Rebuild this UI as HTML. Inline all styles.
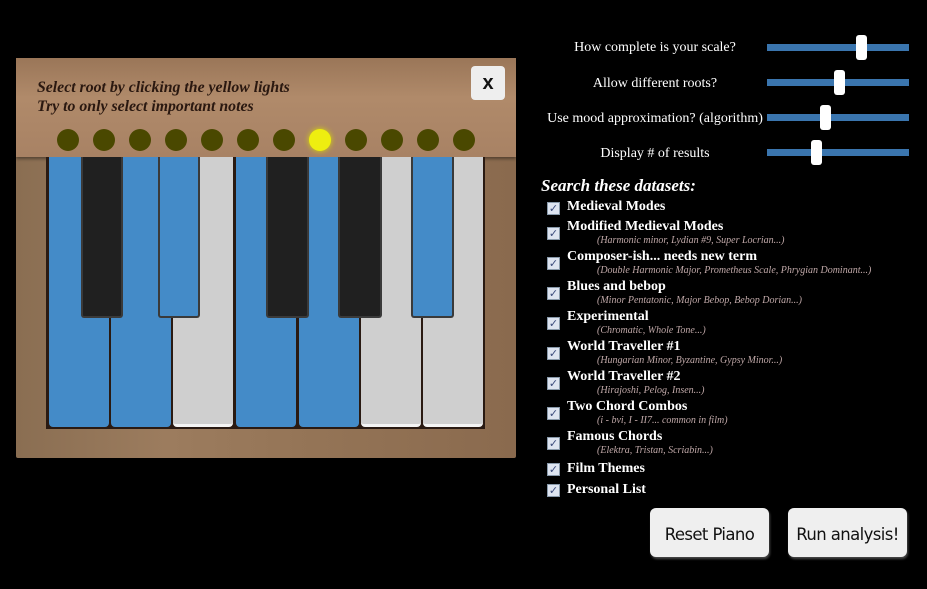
<!DOCTYPE html>
<html><head><meta charset="utf-8"><style>
*{margin:0;padding:0;box-sizing:border-box}
body{width:927px;height:589px;background:#000;position:relative;overflow:hidden;font-family:"Liberation Serif",serif}
.a{position:absolute}
.wood{left:16px;top:58px;width:500px;height:400px;background:linear-gradient(90deg,#8a6e52,#9c7c5e 30%,#947456 60%,#8a6a4e);border-radius:2px}
.top{left:16px;top:58px;width:500px;height:99px;background:linear-gradient(180deg,#9a7658,#b08a6a 40%,#a88264);box-shadow:0 2px 3px rgba(0,0,0,.4)}
.inst{left:37px;top:78px;font:italic bold 15.8px/19px "Liberation Serif",serif;color:#2a1810}
.x{left:471px;top:66px;width:34px;height:34px;background:#eee;border-radius:4px;font:bold 20px/34px "Liberation Sans",sans-serif;text-align:center;color:#111}
.dot{width:22px;height:22px;border-radius:50%;background:#4a4800;top:129px}
.kb{left:46px;top:157px;width:439px;height:272px;background:#2a1a12}
.w{top:157px;width:60px;height:270px;border-radius:0 0 4px 4px}
.b{top:157px;height:161px;border-radius:0 0 3px 3px;border:2px solid #3a3a3a;border-top:0}
.bl{background:#448bc8}.gr{background:#cfcfcf;border-bottom:3px solid #f4f4f4}.bk{background:#202020}
.lab{color:#fff;font-size:14px;text-align:center;width:240px;left:535px}
.tr{left:767px;width:142px;height:7px;background:#3a75ae}
.th{width:11px;height:25px;background:#fff;border-radius:3px}
.h{left:541px;top:176px;font:italic bold 17px "Liberation Serif",serif;color:#fff}
.cb{left:547px;width:13px;height:13px;background:#dde4f0;border:1px solid #8899aa;font:bold 11px/11px "DejaVu Sans",sans-serif;color:#3a4a7a;text-align:center}
.t{left:567px;font:bold 14px "Liberation Serif",serif;color:#fff}
.s{left:597px;font:italic 10px "Liberation Serif",serif;color:#c0a8a8}
.btn{top:508px;width:119px;height:49px;background:#efefef;border-radius:6px;font:16.5px/53px "DejaVu Sans","Liberation Sans",sans-serif;text-align:center;color:#111;letter-spacing:-.6px;box-shadow:1px 2px 2px rgba(120,120,120,.6)}
</style></head><body>
<div class="a wood"></div>
<div class="a top"></div>
<div class="a inst">Select root by clicking the yellow lights<br>Try to only select important notes</div>
<div class="a x">x</div>
<div class="a dot" style="left:57px"></div><div class="a dot" style="left:93px"></div><div class="a dot" style="left:129px"></div><div class="a dot" style="left:165px"></div><div class="a dot" style="left:201px"></div><div class="a dot" style="left:237px"></div><div class="a dot" style="left:273px"></div><div class="a dot" style="left:309px;background:#eeee10;box-shadow:0 0 6px #dd0"></div><div class="a dot" style="left:345px"></div><div class="a dot" style="left:381px"></div><div class="a dot" style="left:417px"></div><div class="a dot" style="left:453px"></div>
<div class="a kb"></div>
<div class="a w bl" style="left:49px"></div>
<div class="a w bl" style="left:111px"></div>
<div class="a w gr" style="left:173px"></div>
<div class="a w bl" style="left:236px"></div>
<div class="a w bl" style="left:299px"></div>
<div class="a w gr" style="left:361px"></div>
<div class="a w gr" style="left:423px"></div>
<div class="a b bk" style="left:81px;width:42px"></div>
<div class="a b bl" style="left:158px;width:42px"></div>
<div class="a b bk" style="left:266px;width:43px"></div>
<div class="a b bk" style="left:338px;width:44px"></div>
<div class="a b bl" style="left:411px;width:43px"></div>
<div class="a lab" style="top:40px">How complete is your scale?</div>
<div class="a lab" style="top:76px">Allow different roots?</div>
<div class="a lab" style="top:111px">Use mood approximation? (algorithm)</div>
<div class="a lab" style="top:146px">Display # of results</div>
<div class="a tr" style="top:44px"></div><div class="a th" style="left:856px;top:35px"></div>
<div class="a tr" style="top:79px"></div><div class="a th" style="left:834px;top:70px"></div>
<div class="a tr" style="top:114px"></div><div class="a th" style="left:820px;top:105px"></div>
<div class="a tr" style="top:149px"></div><div class="a th" style="left:811px;top:140px"></div>
<div class="a h">Search these datasets:</div>
<div class="a cb" style="top:202px">✓</div><div class="a t" style="top:199px">Medieval Modes</div>
<div class="a cb" style="top:227px">✓</div><div class="a t" style="top:219px">Modified Medieval Modes</div><div class="a s" style="top:235px">(Harmonic minor, Lydian #9, Super Locrian...)</div>
<div class="a cb" style="top:257px">✓</div><div class="a t" style="top:249px">Composer-ish... needs new term</div><div class="a s" style="top:265px">(Double Harmonic Major, Prometheus Scale, Phrygian Dominant...)</div>
<div class="a cb" style="top:287px">✓</div><div class="a t" style="top:279px">Blues and bebop</div><div class="a s" style="top:295px">(Minor Pentatonic, Major Bebop, Bebop Dorian...)</div>
<div class="a cb" style="top:317px">✓</div><div class="a t" style="top:309px">Experimental</div><div class="a s" style="top:325px">(Chromatic, Whole Tone...)</div>
<div class="a cb" style="top:347px">✓</div><div class="a t" style="top:339px">World Traveller #1</div><div class="a s" style="top:355px">(Hungarian Minor, Byzantine, Gypsy Minor...)</div>
<div class="a cb" style="top:377px">✓</div><div class="a t" style="top:369px">World Traveller #2</div><div class="a s" style="top:385px">(Hirajoshi, Pelog, Insen...)</div>
<div class="a cb" style="top:407px">✓</div><div class="a t" style="top:399px">Two Chord Combos</div><div class="a s" style="top:415px">(i - bvi, I - II7... common in film)</div>
<div class="a cb" style="top:437px">✓</div><div class="a t" style="top:429px">Famous Chords</div><div class="a s" style="top:445px">(Elektra, Tristan, Scriabin...)</div>
<div class="a cb" style="top:463px">✓</div><div class="a t" style="top:461px">Film Themes</div>
<div class="a cb" style="top:484px">✓</div><div class="a t" style="top:482px">Personal List</div>
<div class="a btn" style="left:650px">Reset Piano</div>
<div class="a btn" style="left:788px">Run analysis!</div>
</body></html>
